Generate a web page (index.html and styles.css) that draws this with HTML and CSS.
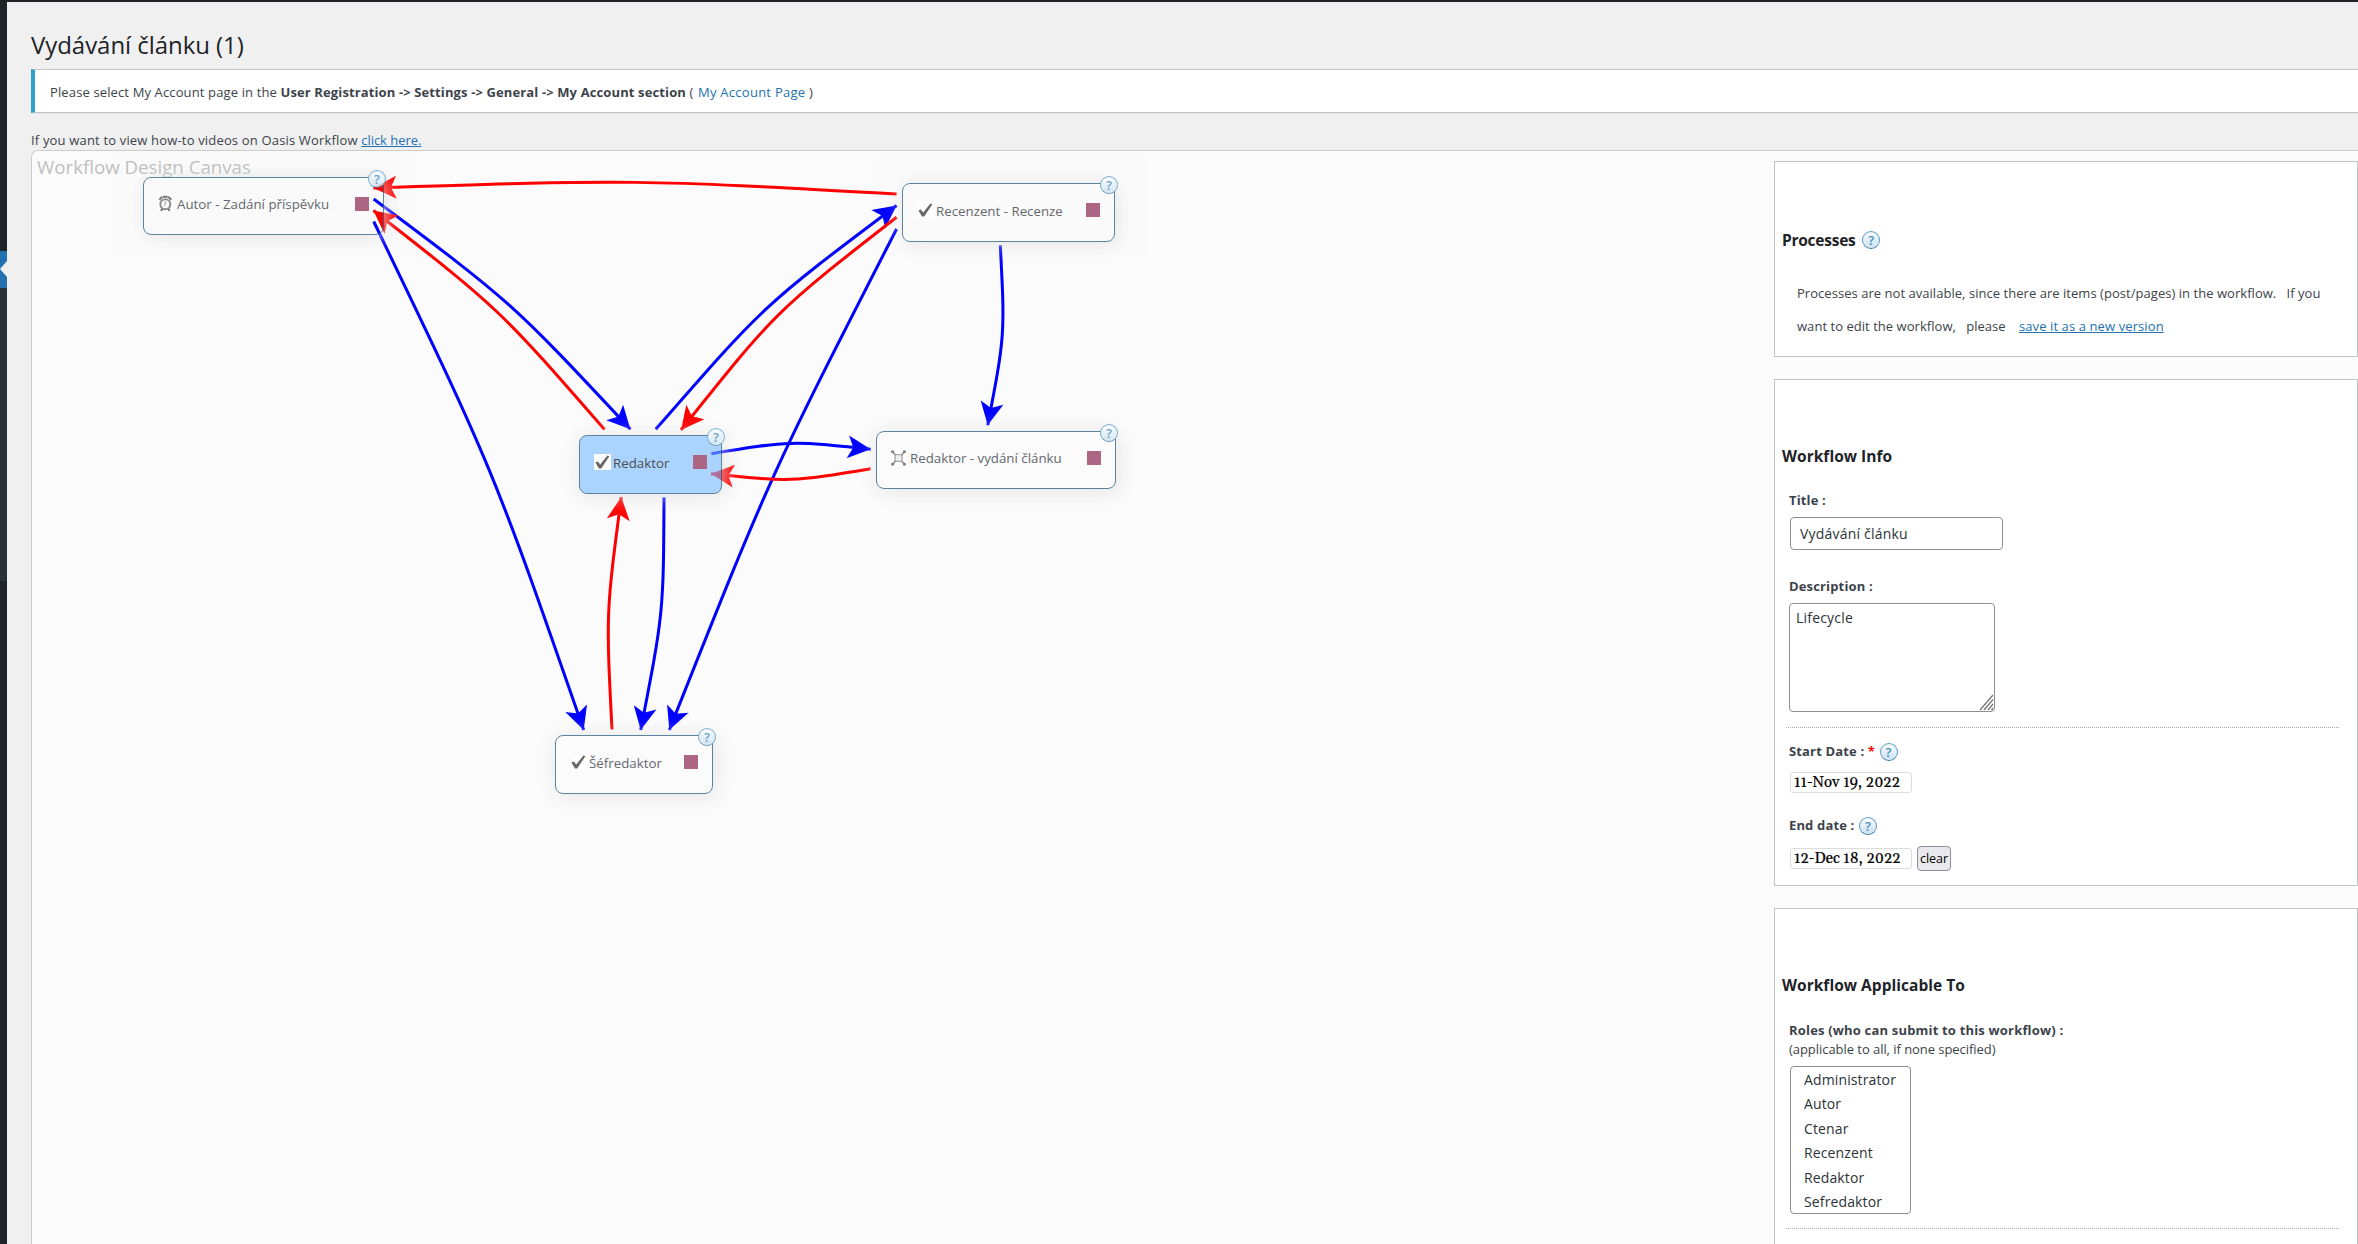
FILE: index.html
```html
<!DOCTYPE html>
<html lang="cs">
<head>
<meta charset="utf-8">
<title>Vydávání článku (1)</title>
<link rel="stylesheet" href="styles.css">
</head>
<body>
<svg class="defs" width="0" height="0" aria-hidden="true">
  <symbol id="check" viewBox="0 0 17 16"><rect width="17" height="16" fill="#fff"/><path d="M1.4 8.6 3.9 7.4 6.2 10.6 13.4 1.4 15.4 2.2 7.2 14.4 5 14.6Z" fill="#444"/></symbol>
  <symbol id="clock" viewBox="0 0 15 17"><rect width="15" height="17" fill="#fff"/><circle cx="7.3" cy="9.2" r="5" fill="#fdfdfd" stroke="#777078" stroke-width="2"/><path d="M1.3 4.8 4.4 1.6M13.3 4.8 10.2 1.6M5 1.8h4.6M2.8 15.8l1.6-2M11.8 15.8l-1.6-2" stroke="#59535b" stroke-width="2" fill="none"/><path d="M7.3 6.2v3.2l-1.6 1.2" stroke="#8a7f92" stroke-width="1" fill="none"/></symbol>
  <symbol id="publish" viewBox="0 0 15 16"><rect width="15" height="16" fill="#fff"/><path d="M4 4.6h7v6.8H4z" fill="#e8eee8" stroke="#999" stroke-width="1.4"/><path d="M1 1.2 4.5 5M14 1.2 10.5 5M1 14.8 4.5 11M14 14.8 10.5 11" stroke="#777" stroke-width="1.6"/><path d="M.3 .5h2.6v2.4H.3zM12.1.5h2.6v2.4h-2.6zM.3 13.1h2.6v2.4H.3zM12.1 13.1h2.6v2.4h-2.6z" fill="#555"/></symbol>
</svg>
<div class="page">
  <nav class="menu"><div class="menu-top"></div><div class="menu-current"></div><div class="menu-sub"></div></nav>
  <main class="content">
    <h1>Vydávání článku (1)</h1>
    <div class="notice"><p><span class="lead">Please select My Account page in the </span><strong>User Registration -&gt; Settings -&gt; General -&gt; My Account section</strong> ( <a href="#">My Account Page</a> )</p></div>
    <p class="videos">If you want to view how-to videos on Oasis Workflow <a href="#">click here.</a></p>
    <div class="workspace">
      <section class="canvas">
        <h2>Workflow Design Canvas</h2>
        <svg class="links" viewBox="32 151 1110 700" width="1110" height="700">
          <defs>
            <marker id="ab" markerUnits="userSpaceOnUse" markerWidth="30" markerHeight="30" viewBox="-25 -15 30 30" refX="0" refY="0" orient="auto"><path d="M0 0-23-11.5-17.5 0-23 11.5Z" fill="#00f"/></marker>
            <marker id="ar" markerUnits="userSpaceOnUse" markerWidth="30" markerHeight="30" viewBox="-25 -15 30 30" refX="0" refY="0" orient="auto"><path d="M0 0-23-11.5-17.5 0-23 11.5Z" fill="red"/></marker>
          </defs>
          <g class="link success">
            <path d="M373.7 199C512 302.5 512 302.5 630.4 429.3"/>
            <path d="M373.7 221.5C493 469 493 469 583.7 730"/>
            <path d="M655.7 429.3C764 305 764 305 896.6 205.5"/>
            <path d="M896.6 229C771 474 771 474 669.3 730"/>
            <path d="M1000.3 245.3C1005 335 1005 335 987.7 425.3"/>
            <path d="M711.3 453.7C791 440.7 791 440.7 870.7 449.3"/>
            <path d="M664 497.3C663.5 613 663.5 613 640.7 730"/>
          </g>
          <g class="link failure">
            <path d="M896.6 194C635 179.5 635 179.5 373.4 188"/>
            <path d="M604.5 429.5C499.5 309 499.5 309 373.4 210.5"/>
            <path d="M896.6 217.3C776 311 776 311 681 430"/>
            <path d="M870.5 468.7C791 482 791 482 711 473.7"/>
            <path d="M612 729.5C606 613 606 613 621.3 497"/>
          </g>
        </svg>
        <div class="step author"><svg class="ico clock"><use href="#clock"/></svg><span>Autor - Zadání příspěvku</span><i class="port"></i><b class="help">?</b></div>
        <div class="step reviewer"><svg class="ico"><use href="#check"/></svg><span>Recenzent - Recenze</span><i class="port"></i><b class="help">?</b></div>
        <div class="step editor selected"><svg class="ico"><use href="#check"/></svg><span>Redaktor</span><i class="port"></i><b class="help">?</b></div>
        <div class="step publisher"><svg class="ico pub"><use href="#publish"/></svg><span>Redaktor - vydání článku</span><i class="port"></i><b class="help">?</b></div>
        <div class="step chief"><svg class="ico"><use href="#check"/></svg><span>Šéfredaktor</span><i class="port"></i><b class="help">?</b></div>
      </section>
      <aside class="side">
        <section class="panel processes">
          <h3>Processes <b class="help">?</b></h3>
          <p>Processes are not available, since there are items (post/pages) in the workflow. &nbsp; If you<br>want to edit the workflow, &nbsp; please &nbsp; <a href="#">save it as a new version</a></p>
        </section>
        <section class="panel info">
          <h3>Workflow Info</h3>
          <label class="lbl">Title :</label>
          <div class="input">Vydávání článku</div>
          <label class="lbl desc">Description :</label>
          <div class="area">Lifecycle<svg class="grip" viewBox="0 0 15 17" width="15" height="17"><path d="M1 16 14 1M5 16 14 5.5M9 16l5-6M12.5 16l1.5-2" stroke="#777" stroke-width="1.3" fill="none"/></svg></div>
          <hr>
          <label class="lbl start">Start Date : <em>*</em> <b class="help">?</b></label>
          <div class="dates"><span class="date">11-Nov 19, 2022</span></div>
          <label class="lbl end">End date : <b class="help">?</b></label>
          <div class="dates last"><span class="date">12-Dec 18, 2022</span><button>clear</button></div>
        </section>
        <section class="panel applicable">
          <h3>Workflow Applicable To</h3>
          <label class="lbl roles">Roles (who can submit to this workflow) :</label>
          <p class="hint">(applicable to all, if none specified)</p>
          <ul><li>Administrator</li><li>Autor</li><li>Ctenar</li><li>Recenzent</li><li>Redaktor</li><li>Sefredaktor</li></ul>
          <hr>
        </section>
      </aside>
    </div>
  </main>
</div>
</body>
</html>
```
FILE: styles.css
```css
* { box-sizing: border-box; }
body { margin: 0; background: #f0f0f1; color: #3c434a; font: 13px/20px "Open Sans", "Noto Sans", sans-serif; overflow: hidden; }
h1, h2, h3, p, ul { margin: 0; padding: 0; }
a { color: #2271b1; }
.defs { display: block; }
.page { display: flex; height: 1244px; border-top: 2px solid #1d2327; overflow: hidden; }

.menu { width: 7px; flex: none; background: linear-gradient(#1d2327 0 250px, #f0f0f1 250px 285px, #1d2327 285px); }
.menu-top { height: 249px; }
.menu-current { height: 37px; background: #2271b1; clip-path: polygon(0 0, 7px 0, 7px 10px, 0 18px, 7px 26px, 7px 37px, 0 37px); }
.menu-sub { height: 293px; background: #2c3338; }

.content { flex: 1; min-width: 0; padding: 28px 0 0 24px; display: flex; flex-direction: column; }
h1 { font-size: 24px; line-height: 30px; font-weight: 400; color: #1d2327; letter-spacing: -.05px; }
.notice { margin-top: 9px; height: 44px; padding: 12px 0 0 15px; background: #fff; border: 1px solid #c3c4c7; border-left: 4px solid #2ea2cc; border-right: 0; box-shadow: 0 1px 1px rgba(0, 0, 0, .04); }
.notice p { letter-spacing: .12px; }
.notice .lead { letter-spacing: .13px; }
.notice strong { letter-spacing: .12px; }
.notice a { text-decoration: none; letter-spacing: .27px; margin-left: 1px; }
.videos { margin-top: 17px; letter-spacing: .17px; }
.videos a { letter-spacing: -.05px; }

.workspace { flex: 1; min-height: 0; display: flex; background: #fbfbfb; border: 1px solid #ccc; border-width: 1px 0 0 1px; border-radius: 7px 0 0 0; overflow: hidden; }
.canvas { position: relative; flex: 1; }
h2 { padding: 4px 0 0 5px; font-size: 18.7px; line-height: 24px; font-weight: 400; color: #bfbfbf; }
.links { position: absolute; left: 0; top: 0; }
.link { fill: none; stroke-width: 3; }
.success { stroke: #00f; }
.failure { stroke: #f00; }
.success path { marker-end: url(#ab); }
.failure path { marker-end: url(#ar); }

.step { position: absolute; height: 58px; display: flex; align-items: center; padding: 0 14px 5px 14px; border: 1px solid #346789; border-radius: 8px; box-shadow: 2px 2px 19px #e0e0e0; opacity: .8; font-size: 13.3px; white-space: nowrap; }
.step span { margin: 1px 0 0 3px; }
.ico { width: 17px; height: 16px; flex: none; }
.ico:not(.clock):not(.pub) + span { margin-left: 2px; }
.ico.clock { width: 15px; height: 17px; }
.ico.clock + span { margin-left: 4px; }
.ico.pub { width: 15px; height: 16px; }
.ico.pub + span { margin-left: 4px; }
.port { width: 14px; height: 14px; margin-left: auto; background: #994066; }
.author { left: 111px; top: 26px; width: 241px; }
.reviewer { left: 870px; top: 32px; width: 213px; height: 59px; }
.editor { left: 547px; top: 284px; width: 143px; height: 59px; }
.publisher { left: 844px; top: 280px; width: 240px; }
.chief { left: 523px; top: 584px; width: 158px; height: 59px; }
.selected { background: rgba(119, 186, 255, .76); color: #1d2327; }

.help { display: inline-block; width: 18px; height: 18px; border: 1px solid #5f9cc6; border-bottom-color: #3a7ba8; border-radius: 50%; background: linear-gradient(#fff, #c6e0f0); box-shadow: inset 0 0 0 1px #e3f1fa; color: #4a8fbd; font: 600 13px/16px "Open Sans", sans-serif; text-align: center; vertical-align: middle; letter-spacing: 0; }
.step .help { position: absolute; top: -8px; right: -4px; }
.author .help, .publisher .help { right: -3px; }

.side { width: 584px; flex: none; padding-top: 10px; display: flex; flex-direction: column; gap: 22px; }
.panel { flex: none; background: #fff; border: 1px solid #c3c4c7; padding-top: 66px; }
h3 { padding-left: 7px; font-size: 15.5px; line-height: 20px; height: 20px; font-weight: 700; color: #1d2327; letter-spacing: .03px; }
h3 .help { margin: -3px 0 0 3px; }
.processes { height: 196px; padding-top: 68px; }
.processes h3 { letter-spacing: -.25px; }
.processes p { margin: 27px 0 0 22px; line-height: 33px; white-space: nowrap; letter-spacing: .04px; }
.processes a { margin-left: 3px; letter-spacing: .1px; }
.info { height: 507px; }
.lbl { display: block; height: 20px; padding-left: 14px; font-weight: 700; letter-spacing: .15px; }
.lbl em { color: #f00; font-style: normal; }
.lbl .help { margin: -1px 0 0 1px; }
.info h3 + .lbl { margin-top: 24px; }
.input { width: 213px; height: 33px; margin: 7px 0 0 15px; padding: 6px 9px; border: 1px solid #8c8f94; border-radius: 4px; color: #2c3338; font-size: 14px; line-height: 20px; letter-spacing: .2px; }
.desc { margin-top: 26px; }
.area { position: relative; width: 206px; height: 109px; margin: 7px 0 0 14px; padding: 4px 6px; border: 1px solid #8c8f94; border-radius: 4px; color: #2c3338; font-size: 14px; line-height: 20px; letter-spacing: .2px; }
.grip { position: absolute; right: 0; bottom: 0; }
hr { width: 553px; height: 0; margin: 15px 0 0 11px; border: 0; border-top: 1px dotted #aaa; }
.start { margin-top: 13px; }
.dates { display: flex; align-items: center; gap: 5px; height: 25px; margin: 9px 0 0 15px; }
.date { width: 122px; height: 21px; padding-left: 3px; border: 1px solid #ddd; border-radius: 3px; color: #000; font: 15px/20px Georgia, Gelasio, "Liberation Serif", serif; white-space: nowrap; -webkit-text-stroke: .2px #000; }
.end { margin-top: 20px; }
.dates.last { margin-top: 11px; }
button { width: 34px; height: 25px; padding: 0; border: 1px solid #8f8f9d; border-radius: 4px; background: #e9e9ed; color: #000; font: 12.5px/22px "Open Sans", sans-serif; }
.roles { margin-top: 25px; height: 19px; letter-spacing: .18px; }
.hint { padding: 1px 0 0 14px; line-height: 19px; letter-spacing: -.05px; }
ul { list-style: none; width: 121px; height: 148px; margin: 7px 0 0 15px; padding: 1px 0 0 13px; border: 1px solid #8c8f94; border-radius: 4px; color: #2c3338; font-size: 14px; line-height: 24.4px; letter-spacing: .13px; }
.applicable hr { margin-top: 14px; }
.applicable { height: 400px; }
```
